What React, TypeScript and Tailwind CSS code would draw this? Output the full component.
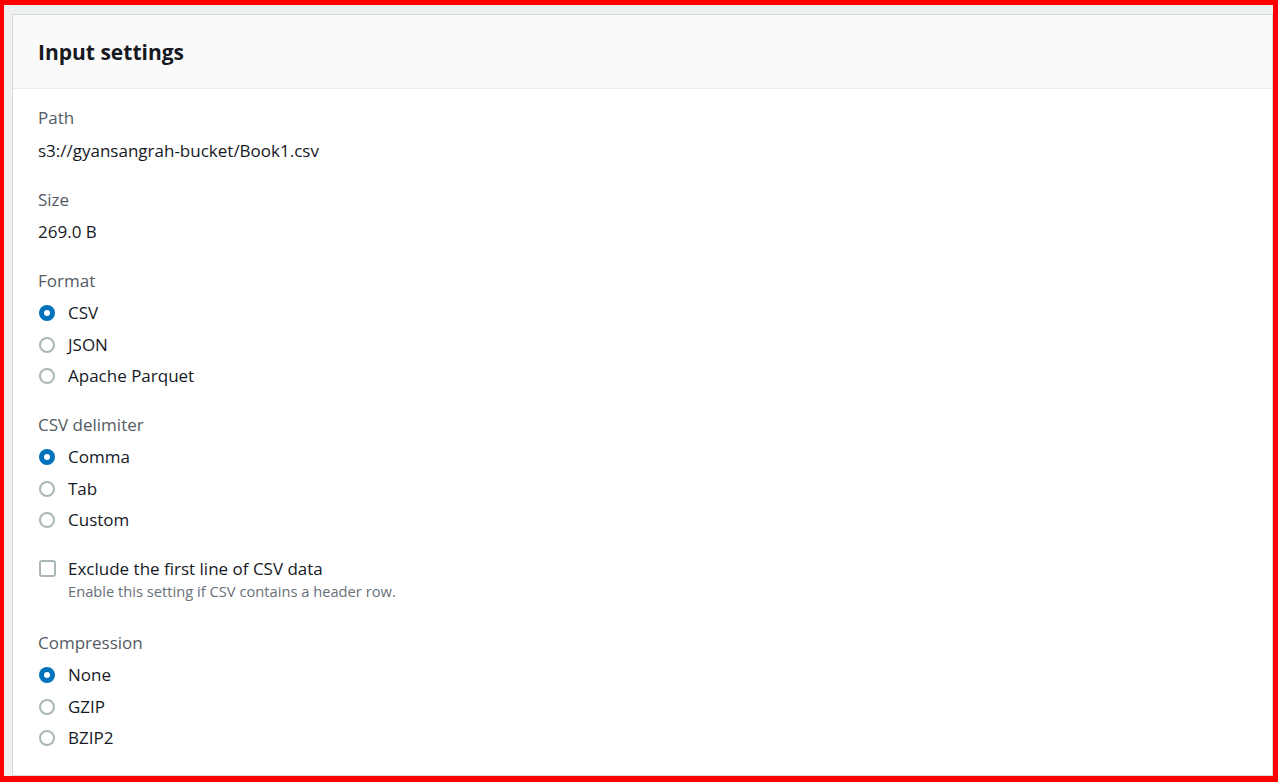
import React, { useState } from "react";

type Opt = { id: string; label: string };

function Radio({ checked }: { checked: boolean }) {
  return checked ? (
    <span className="w-4 h-4 rounded-full bg-[#0073bb] flex items-center justify-center shrink-0">
      <span className="w-[6px] h-[6px] rounded-full bg-white"></span>
    </span>
  ) : (
    <span className="w-4 h-4 rounded-full border-2 border-[#aab7b8] bg-white shrink-0"></span>
  );
}

function RadioGroup({ label, options, value, onChange }: { label: string; options: Opt[]; value: string; onChange: (v: string) => void }) {
  return (
    <div className="flex flex-col">
      <div className="text-[#545b64] leading-6">{label}</div>
      <div className="flex flex-col gap-[7.5px] mt-2">
        {options.map(o => (
          <label key={o.id} onClick={() => onChange(o.id)} className="flex items-center gap-[13px] pl-[1px] leading-6 text-[#16191f] cursor-pointer">
            <Radio checked={value === o.id} />
            <span>{o.label}</span>
          </label>
        ))}
      </div>
    </div>
  );
}

export default function App() {
  const [format, setFormat] = useState("csv");
  const [delim, setDelim] = useState("comma");
  const [comp, setComp] = useState("none");
  const [skipHeader, setSkipHeader] = useState(false);

  return (
    <div className="w-[1278px] h-[782px] overflow-hidden border-t-[5px] border-l-[4px] border-r-[5px] border-b-[6px] border-[#ff0000] bg-[#eef0f2] pt-[9px] pl-[8px] text-[17px]" style={{ fontFamily: '"Open Sans", "Noto Sans", sans-serif' }}>
      <div className="h-full bg-white border border-[#d5dbdb] flex flex-col">
        <div className="h-[74px] bg-[#fafafa] border-b border-[#eaeded] flex items-center px-[25px]">
          <h2 className="text-[21px] font-bold text-[#16191f] leading-7">Input settings</h2>
        </div>

        <div className="flex flex-col gap-[25px] px-[25px] pt-[17px]">
          <div className="flex flex-col">
            <div className="text-[#545b64] leading-6">Path</div>
            <div className="text-[#16191f] leading-6 mt-[9px]">s3://gyansangrah-bucket/Book1.csv</div>
          </div>

          <div className="flex flex-col">
            <div className="text-[#545b64] leading-6">Size</div>
            <div className="text-[#16191f] leading-6 mt-2">269.0 B</div>
          </div>

          <RadioGroup
            label="Format"
            value={format}
            onChange={setFormat}
            options={[
              { id: "csv", label: "CSV" },
              { id: "json", label: "JSON" },
              { id: "parquet", label: "Apache Parquet" },
            ]}
          />

          <RadioGroup
            label="CSV delimiter"
            value={delim}
            onChange={setDelim}
            options={[
              { id: "comma", label: "Comma" },
              { id: "tab", label: "Tab" },
              { id: "custom", label: "Custom" },
            ]}
          />

          <label onClick={() => setSkipHeader(!skipHeader)} className="flex items-start gap-[12px] pl-[1px] cursor-pointer mb-[5px]">
            <span className={`mt-[3px] w-[17px] h-[17px] rounded-[3px] border-2 shrink-0 ${skipHeader ? "bg-[#0073bb] border-[#0073bb]" : "bg-white border-[#aab7b8]"}`}></span>
            <span className="flex flex-col">
              <span className="text-[#16191f] leading-6">Exclude the first line of CSV data</span>
              <span className="text-[#687078] text-[14.7px] leading-5">Enable this setting if CSV contains a header row.</span>
            </span>
          </label>

          <RadioGroup
            label="Compression"
            value={comp}
            onChange={setComp}
            options={[
              { id: "none", label: "None" },
              { id: "gzip", label: "GZIP" },
              { id: "bzip2", label: "BZIP2" },
            ]}
          />
        </div>
      </div>
    </div>
  );
}
